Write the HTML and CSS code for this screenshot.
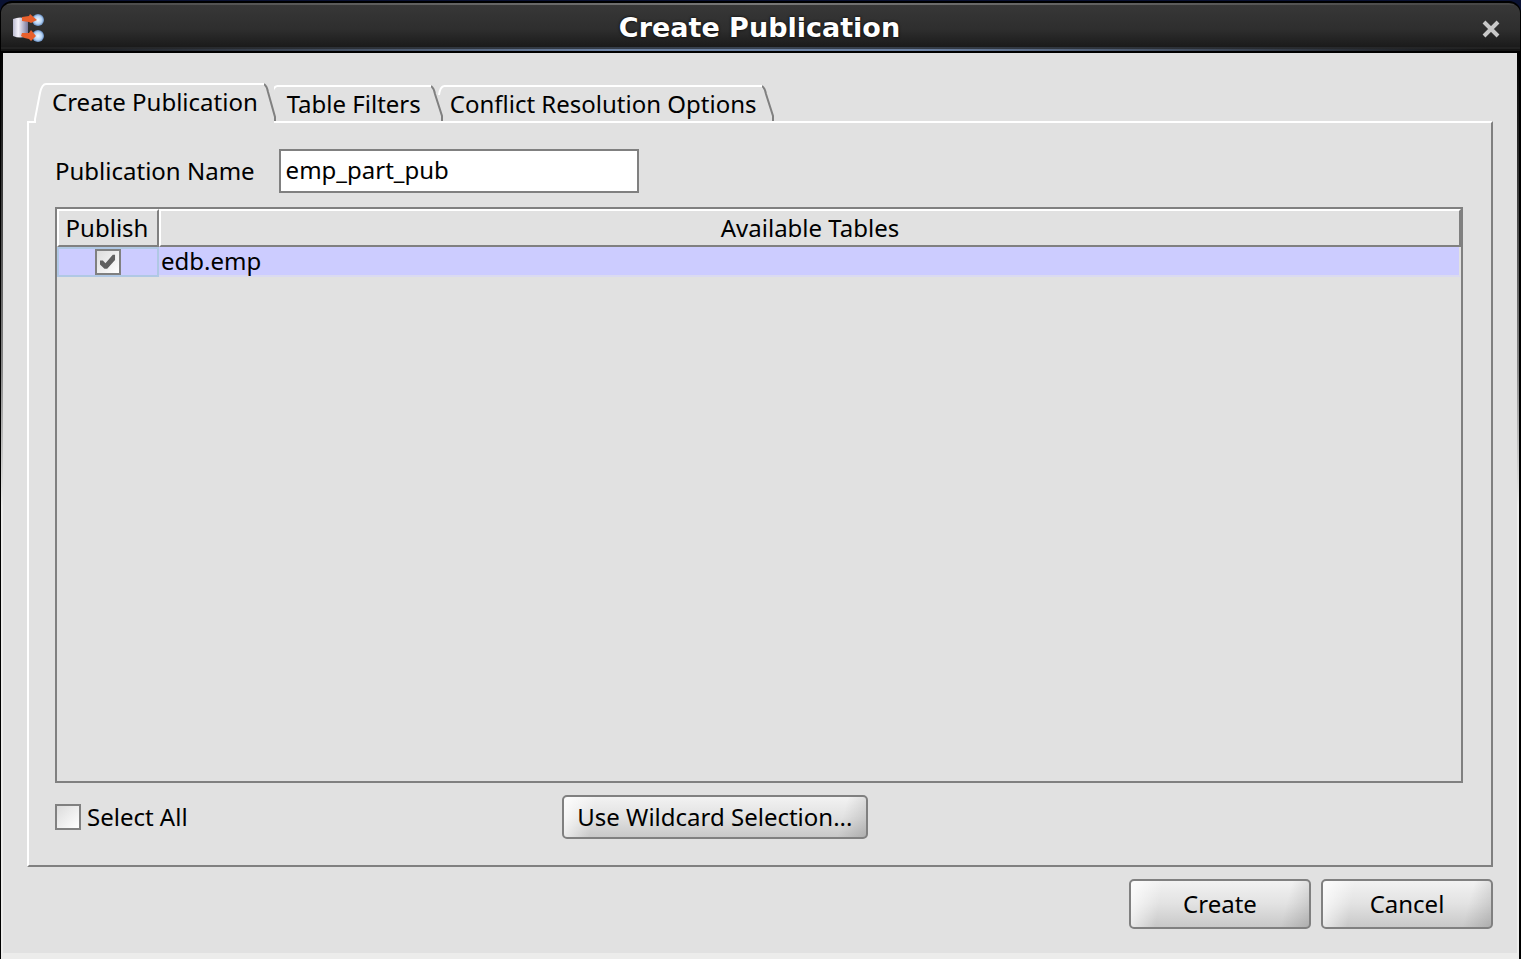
FILE: index.html
```html
<!DOCTYPE html>
<html lang="en">
<head>
<meta charset="utf-8">
<title>Create Publication</title>
<link rel="stylesheet" href="styles.css">
</head>
<body>
<div class="window">
  <header class="titlebar">
    <svg class="app-icon" width="32" height="30" viewBox="0 0 32 30" aria-hidden="true">
      <defs>
        <linearGradient id="drum" x1="0" x2="1" y1="0" y2="0">
          <stop offset="0" stop-color="#b9b9cf"/><stop offset=".35" stop-color="#f6f3fb"/><stop offset="1" stop-color="#77779a"/>
        </linearGradient>
        <radialGradient id="ball" cx=".5" cy=".5" r=".55">
          <stop offset="0" stop-color="#f2f8ff"/><stop offset=".6" stop-color="#b4d2f4"/><stop offset="1" stop-color="#4c74ac"/>
        </radialGradient>
      </defs>
      <circle cx="25" cy="7" r="6" fill="url(#ball)"/>
      <circle cx="25" cy="23" r="6" fill="url(#ball)"/>
      <path d="M0 6Q7 3 15 6V23Q7 26 0 23Z" fill="url(#drum)"/>
      <path d="M9 4L16 3L17 1L24 7L18 10L16 9L9 8Z" fill="#e8602c"/>
      <path d="M9 20L16 20L18 17L23 23L18 28L16 26Q12 26 8 23Z" fill="#e8602c"/>
    </svg>
    <h1 class="title">Create Publication</h1>
    <button class="close" type="button" aria-label="Close">
      <svg width="18" height="18" viewBox="0 0 18 18" aria-hidden="true"><path d="M2 2L16 16M16 2L2 16" stroke="#c8c8c8" stroke-width="4"/></svg>
    </button>
  </header>
  <main class="body">
    <div class="tabs" role="tablist">
      <button class="tab tab-active" type="button" role="tab" aria-selected="true">
        <svg width="13" height="40" viewBox="0 0 13 40" aria-hidden="true"><path d="M0 39H2V36L7 10Q9 1 13 1" fill="none" stroke="#fff" stroke-width="2"/></svg>
        <span class="tab-label">Create Publication</span>
        <svg width="12" height="40" viewBox="0 0 12 40" aria-hidden="true"><path d="M0 1Q3 3 4 9L11 34V38" fill="none" stroke="#808080" stroke-width="2"/></svg>
      </button>
      <button class="tab" type="button" role="tab" aria-selected="false">
        <svg width="6" height="36" viewBox="0 0 6 36" aria-hidden="true"><path d="M1 10Q2 2 6 1" fill="none" stroke="#fff" stroke-width="2"/></svg>
        <span class="tab-label">Table Filters</span>
        <svg width="12" height="36" viewBox="0 0 12 36" aria-hidden="true"><path d="M0 1Q3 3 4 9L11 31V36" fill="none" stroke="#808080" stroke-width="2"/></svg>
      </button>
      <button class="tab" type="button" role="tab" aria-selected="false">
        <svg width="6" height="36" viewBox="0 0 6 36" aria-hidden="true"><path d="M1 10Q2 2 6 1" fill="none" stroke="#fff" stroke-width="2"/></svg>
        <span class="tab-label">Conflict Resolution Options</span>
        <svg width="12" height="36" viewBox="0 0 12 36" aria-hidden="true"><path d="M0 1Q3 3 4 9L11 31V36" fill="none" stroke="#808080" stroke-width="2"/></svg>
      </button>
    </div>
    <section class="panel" role="tabpanel">
      <div class="field">
        <label for="pub-name">Publication Name</label>
        <input class="text-input" id="pub-name" type="text" value="emp_part_pub">
      </div>
      <div class="table-box">
        <table class="grid">
          <thead>
            <tr><th class="col-publish">Publish</th><th>Available Tables</th></tr>
          </thead>
          <tbody>
            <tr>
              <td class="cell-check"><input class="check" type="checkbox" aria-label="Publish edb.emp" checked></td>
              <td class="cell-name">edb.emp</td>
            </tr>
          </tbody>
        </table>
      </div>
      <div class="panel-actions">
        <label class="select-all"><input class="check" type="checkbox">Select All</label>
        <button class="btn btn-wildcard" type="button">Use Wildcard Selection...</button>
      </div>
    </section>
    <footer class="dialog-actions">
      <button class="btn btn-create" type="button">Create</button>
      <button class="btn btn-cancel" type="button">Cancel</button>
    </footer>
  </main>
</div>
</body>
</html>
```
FILE: styles.css
```css
* { box-sizing: border-box; }

body {
  margin: 0;
  background: #0a1233;
  color: #000;
  font-family: "Noto Sans", sans-serif;
  font-size: 24px;
  line-height: 32px;
}

button, input { font: inherit; color: inherit; margin: 0; }

.window {
  display: flex;
  flex-direction: column;
  min-height: 100vh;
  padding-top: 1px;
}

.titlebar {
  display: grid;
  grid-template-columns: 55px 1fr 58px;
  align-items: center;
  height: 52px;
  padding: 2px 0 0 1px;
  border: solid #000;
  border-width: 2px 1px;
  border-radius: 12px 12px 0 0;
  background:
    linear-gradient(90deg, #141414 2%, #6e84a6 40%, #6e84a6 60%, #141414 98%) bottom / 100% 2px no-repeat,
    linear-gradient(90deg, #222 2%, #3a4452 50%, #222 98%) 0 44px / 100% 2px no-repeat,
    linear-gradient(90deg, #444, #777 50%, #444) top / 100% 2px no-repeat,
    linear-gradient(#383838, #2e2e2e 55%, #161616);
}

.app-icon { margin-left: 11px; }

.title {
  margin: 0;
  color: #fff;
  font: bold 27px/32px "DejaVu Sans", sans-serif;
  text-align: center;
  text-shadow: 0 0 3px #000;
}

.close {
  display: flex;
  padding: 2px 0 0;
  border: 0;
  background: none;
  justify-self: center;
}

.body {
  display: flex;
  flex: 1;
  flex-direction: column;
  padding: 30px 26px 24px;
  border: solid #000;
  border-width: 0 2px 0 1px;
  background:
    linear-gradient(#ececeb, #ececeb) bottom / 100% 6px no-repeat,
    linear-gradient(#000, #888 35%, #ececeb 50%) left / 2px 100% no-repeat,
    linear-gradient(#000, #888 35%, #ececeb 50%) right / 2px 100% no-repeat,
    #e1e1e1;
  padding-bottom: 30px;
}

.tabs {
  display: flex;
  align-items: flex-end;
  padding-left: 6px;
}

.tab {
  display: flex;
  height: 36px;
  margin-left: -5px;
  padding: 0;
  border: 0;
  background: none;
}

.tab-label {
  min-width: 154px;
  padding: 1px 6px 0;
  border-top: 2px solid #fff;
}

.tab-active {
  z-index: 1;
  height: 40px;
  margin: 0 0 -2px;
  background: linear-gradient(#e1e1e1, #e1e1e1) 2px 0 / calc(100% - 4px) 100% no-repeat;
}

.panel {
  display: flex;
  flex: 1;
  flex-direction: column;
  padding: 26px 28px 26px 26px;
  border: 2px solid;
  border-color: #fff #808080 #808080 #fff;
}

.field {
  display: flex;
  align-items: center;
  gap: 24px;
  margin-bottom: 14px;
}

.text-input {
  width: 360px;
  height: 44px;
  padding: 0 5px 4px;
  border: 2px solid #808080;
  border-radius: 0;
  background: #fff;
}

.table-box {
  flex: 1;
  border: 2px solid #808080;
}

.grid {
  width: 100%;
  border-collapse: separate;
  border-spacing: 0;
  table-layout: fixed;
}

.grid th {
  height: 38px;
  padding: 0;
  border: 2px solid;
  border-color: #fff #808080 #808080 #fff;
  font-weight: normal;
}

.grid .col-publish { width: 102px; padding-right: 2px; }

.grid td {
  height: 30px;
  padding: 0;
  border-right: 2px solid #e1e1e1;
  background: #ccf;
  line-height: 28px;
}

.grid .cell-check {
  border: 2px solid #b0c8e4;
}

.grid .cell-name {
  padding-left: 2px;
  border-bottom: 2px solid #dadaf0;
}

.check {
  display: block;
  width: 26px;
  height: 26px;
  border: 2px solid #808080;
  appearance: none;
  background: linear-gradient(135deg, #dcdcdc, #fff);
}

.cell-check .check { margin: 0 auto; }

.check:checked::after {
  content: "";
  display: block;
  width: 16px;
  height: 16px;
  margin: 3px;
  background: #606060;
  clip-path: polygon(0 40%, 18% 40%, 34% 58%, 80% 5%, 94% 5%, 94% 38%, 45% 92%, 28% 92%, 0 65%);
}

.panel-actions {
  display: grid;
  grid-template-columns: 36% auto;
  align-items: center;
  justify-content: start;
  margin-top: 12px;
}

.select-all {
  display: flex;
  align-items: center;
  gap: 6px;
}

.btn {
  height: 50px;
  padding: 0;
  border: 2px solid #808080;
  border-radius: 5px;
  background:
    linear-gradient(100deg, #fffc, #fff0 32px),
    linear-gradient(285deg, #0002, #0000 28px),
    linear-gradient(#f2f2f2, #e2e2e2 50%, #c8c8c8);
}

.btn-wildcard { width: 306px; height: 44px; }
.btn-create { width: 182px; }
.btn-cancel { width: 172px; }

.dialog-actions {
  display: flex;
  justify-content: flex-end;
  gap: 10px;
  margin-top: 12px;
}
```
